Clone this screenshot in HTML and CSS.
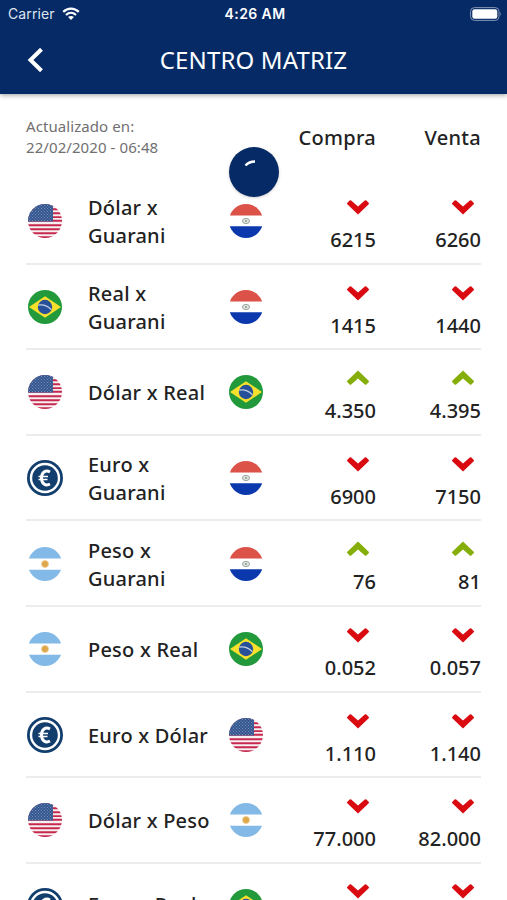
FILE: index.html
```html
<!DOCTYPE html>
<html lang="es">
<head>
    <meta charset="UTF-8">
    <title>Centro Matriz</title>
    <link rel="stylesheet" href="styles.css">
</head>
<body>

<svg class="defs">
    <clipPath id="round"><circle cx="18" cy="18" r="17"/></clipPath>
    <pattern id="stars" width="3" height="3" patternUnits="userSpaceOnUse">
        <circle cx="1" cy="1" r=".55" fill="#7f98c0"/>
        <circle cx="2.5" cy="2.5" r=".55" fill="#7f98c0"/>
    </pattern>
    <symbol id="us" viewBox="0 0 36 36">
        <g clip-path="url(#round)">
            <path fill="#f6f0f2" d="M0 0h36v36H0z"/>
            <path stroke="#c8284d" stroke-width="1.9" d="M0 2.2h36M0 6.2h36M0 10.2h36M0 14.1h36M0 17.8h36M0 22.2h36M0 26.2h36M0 30.2h36M0 34.1h36"/>
            <path fill="#34568f" d="M0 0h26v18.5H0z"/>
            <path fill="url(#stars)" d="M0 0h26v18.5H0z"/>
        </g>
    </symbol>
    <symbol id="py" viewBox="0 0 36 36">
        <g clip-path="url(#round)">
            <path fill="#fff" d="M0 0h36v36H0z"/>
            <path fill="#dc5148" d="M0 0h36v12.6H0z"/>
            <path fill="#0c38ae" d="M0 23.3h36V36H0z"/>
        </g>
        <ellipse cx="18" cy="18" rx="3.5" ry="2.6" fill="#e4e8e2" stroke="#98a49a" stroke-width="1"/>
        <circle cx="18" cy="18" r="1.1" fill="#8e9c90"/>
    </symbol>
    <symbol id="br" viewBox="0 0 36 36">
        <circle cx="18" cy="18" r="17" fill="#229a3b"/>
        <path fill="#f8e02c" d="M18 7.2L34 18 18 28.8 2 18z"/>
        <circle cx="18" cy="18" r="7.2" fill="#27509a"/>
        <path fill="none" stroke="#c3d2df" stroke-width="1.3" d="M11.3 16.2c5-.9 9.7 1 13 4.5"/>
    </symbol>
    <symbol id="ar" viewBox="0 0 36 36">
        <g clip-path="url(#round)">
            <path fill="#fff" d="M0 0h36v36H0z"/>
            <path fill="#82b9e6" d="M0 0h36v12.4H0zM0 23.7h36V36H0z"/>
        </g>
        <circle cx="18" cy="18" r="3.5" fill="#dfa64a" stroke="#efcf98" stroke-width=".8"/>
    </symbol>
    <symbol id="eu" viewBox="0 0 36 36">
        <circle cx="18" cy="18" r="18" fill="#123e6e"/>
        <circle cx="18" cy="18" r="14" fill="none" stroke="#fff" stroke-width="2.4"/>
        <path fill="none" stroke="#fff" stroke-width="3" d="M23 12c-4.5-2.4-8.5.4-8.5 6s4 8.4 8.5 6"/>
        <path stroke="#fff" stroke-width="1.5" d="M11.5 16.5H21M11.5 19.5h9"/>
    </symbol>
    <symbol id="down" viewBox="0 0 24 16">
        <path fill="#d90a10" d="M1.2 4L3.6 1.6q.8-.8 1.6 0L12 7.6l6.8-6q.8-.8 1.6 0L22.8 4q.5.6-.1 1.2L12 15.400 1.3 5.2q-.6-.6-.1-1.2z"/>
    </symbol>
    <symbol id="up" viewBox="0 0 24 16">
        <path fill="#86ae08" d="M1.2 12l2.4 2.4q.8.8 1.6 0l6.8-6 6.8 6q.8.8 1.6 0l2.4-2.4q.5-.6-.1-1.2L12 .6 1.3 10.8q-.6.6-.1 1.2z"/>
    </symbol>
</svg>

<div class="app">
    <div class="header">
        <div class="status">
            <div class="carrier">Carrier
                <svg class="wifi" viewBox="0 0 18 13">
                    <path fill="none" stroke="#fff" stroke-width="2.2" d="M1.2 4.9c4.5-4.4 11.1-4.4 15.6 0M4 8c3-2.9 7-2.9 10 0"/>
                    <path fill="#fff" d="M9 13L6.1 10c1.7-1.5 4.1-1.5 5.8 0z"/>
                </svg>
            </div>
            <div class="clock">4:26 AM</div>
            <div class="power">
                <svg class="battery" viewBox="0 0 32 14">
                    <rect x=".6" y=".6" width="28.4" height="12.8" rx="3.8" fill="none" stroke="#8494b5" stroke-width="1"/>
                    <rect x="2.3" y="2.3" width="25" height="9.4" rx="2.2" fill="#fff"/>
                    <path fill="#8494b5" d="M30.2 4.8q1.6 2.2 0 4.4z"/>
                </svg>
            </div>
        </div>
        <div class="navbar">
            <svg class="back" viewBox="0 0 16 26">
                <path fill="none" stroke="#fff" stroke-width="4" d="M14.5 2.3L3.5 13l11 10.7"/>
            </svg>
            <h1 class="title">CENTRO MATRIZ</h1>
        </div>
    </div>

    <div class="content">
        <div class="head">
            <p class="updated">Actualizado en:<br>22/02/2020 - 06:48</p>
            <div class="col">Compra</div>
            <div class="col">Venta</div>
            <div class="spinner">
                <svg viewBox="0 0 50 50"><path fill="none" stroke="#fff" stroke-width="2.4" d="M16.5 18.5q3.5-4 9.5-4"/></svg>
            </div>
        </div>

        <div class="row">
            <svg class="flag"><use href="#us"/></svg>
            <div class="name">Dólar x Guarani</div>
            <svg class="flag"><use href="#py"/></svg>
            <div class="price"><svg class="arrow"><use href="#down"/></svg>6215</div>
            <div class="price"><svg class="arrow"><use href="#down"/></svg>6260</div>
        </div>
        <div class="row">
            <svg class="flag"><use href="#br"/></svg>
            <div class="name">Real x Guarani</div>
            <svg class="flag"><use href="#py"/></svg>
            <div class="price"><svg class="arrow"><use href="#down"/></svg>1415</div>
            <div class="price"><svg class="arrow"><use href="#down"/></svg>1440</div>
        </div>
        <div class="row">
            <svg class="flag"><use href="#us"/></svg>
            <div class="name">Dólar x Real</div>
            <svg class="flag"><use href="#br"/></svg>
            <div class="price"><svg class="arrow"><use href="#up"/></svg>4.350</div>
            <div class="price"><svg class="arrow"><use href="#up"/></svg>4.395</div>
        </div>
        <div class="row">
            <svg class="flag"><use href="#eu"/></svg>
            <div class="name">Euro x Guarani</div>
            <svg class="flag"><use href="#py"/></svg>
            <div class="price"><svg class="arrow"><use href="#down"/></svg>6900</div>
            <div class="price"><svg class="arrow"><use href="#down"/></svg>7150</div>
        </div>
        <div class="row">
            <svg class="flag"><use href="#ar"/></svg>
            <div class="name">Peso x Guarani</div>
            <svg class="flag"><use href="#py"/></svg>
            <div class="price"><svg class="arrow"><use href="#up"/></svg>76</div>
            <div class="price"><svg class="arrow"><use href="#up"/></svg>81</div>
        </div>
        <div class="row">
            <svg class="flag"><use href="#ar"/></svg>
            <div class="name">Peso x Real</div>
            <svg class="flag"><use href="#br"/></svg>
            <div class="price"><svg class="arrow"><use href="#down"/></svg>0.052</div>
            <div class="price"><svg class="arrow"><use href="#down"/></svg>0.057</div>
        </div>
        <div class="row">
            <svg class="flag"><use href="#eu"/></svg>
            <div class="name">Euro x Dólar</div>
            <svg class="flag"><use href="#us"/></svg>
            <div class="price"><svg class="arrow"><use href="#down"/></svg>1.110</div>
            <div class="price"><svg class="arrow"><use href="#down"/></svg>1.140</div>
        </div>
        <div class="row">
            <svg class="flag"><use href="#us"/></svg>
            <div class="name">Dólar x Peso</div>
            <svg class="flag"><use href="#ar"/></svg>
            <div class="price"><svg class="arrow"><use href="#down"/></svg>77.000</div>
            <div class="price"><svg class="arrow"><use href="#down"/></svg>82.000</div>
        </div>
        <div class="row">
            <svg class="flag"><use href="#eu"/></svg>
            <div class="name">Euro x Real</div>
            <svg class="flag"><use href="#br"/></svg>
            <div class="price"><svg class="arrow"><use href="#down"/></svg></div>
            <div class="price"><svg class="arrow"><use href="#down"/></svg></div>
        </div>
    </div>
</div>

</body>
</html>
```

FILE: styles.css
```css
body {
    margin: 0;
    font-family: "Noto Sans", "Open Sans", sans-serif;
    color: #222;
    background: #fff;
}
.defs {
    display: block;
    width: 0;
    height: 0;
}
.app {
    height: 900px;
    overflow: hidden;
}
.header {
    height: 94px;
    color: #fff;
    background: #062a65;
    box-shadow: 0 1px 5px rgba(0, 0, 0, .4);
}
.status {
    display: grid;
    grid-template-columns: 1fr auto 1fr;
    align-items: center;
    height: 27px;
    padding: 0 5px 0 8px;
    font-family: Inter, sans-serif;
    font-size: 14px;
}
.carrier {
    display: flex;
    align-items: center;
    gap: 7px;
    color: #dfe5ef;
    letter-spacing: .1px;
}
.wifi {
    width: 18px;
    height: 13px;
}
.clock {
    font-size: 14px;
    font-weight: 600;
    letter-spacing: .4px;
}
.power {
    text-align: right;
}
.battery {
    display: block;
    width: 32px;
    height: 14px;
    margin-left: auto;
}
.navbar {
    display: grid;
    grid-template-columns: 60px 1fr 60px;
    align-items: center;
    height: 65px;
}
.back {
    width: 16px;
    height: 26px;
    margin-left: 27px;
}
.title {
    margin: 0;
    text-align: center;
    font-size: 24px;
    font-weight: 400;
    letter-spacing: .15px;
}
.content {
    padding: 0 26px;
}
.head,
.row {
    display: grid;
    grid-template-columns: 62px 139px 36px 113px 105px;
    align-items: center;
}
.head {
    position: relative;
    height: 85px;
    align-items: start;
}
.updated {
    grid-column: 1 / 4;
    margin: 22px 0 0;
    color: #707070;
    font-size: 15px;
    letter-spacing: .08px;
    line-height: 21px;
}
.col {
    padding-top: 30px;
    text-align: right;
    font-size: 20px;
    font-weight: 500;
    letter-spacing: .3px;
    line-height: 28px;
}
.spinner {
    position: absolute;
    left: 203px;
    top: 53px;
    width: 50px;
    height: 50px;
    border-radius: 50%;
    background: #062a65;
    box-shadow: 0 1px 3px rgba(0, 0, 0, .2);
}
.row {
    box-sizing: border-box;
    height: 85.6px;
    border-bottom: 2px solid #ececec;
}
.flag {
    width: 36px;
    height: 36px;
    margin: 1px 0 0 .5px;
}
.name {
    padding: 3px 12px 0 0;
    font-size: 20px;
    font-weight: 500;
    letter-spacing: .22px;
    line-height: 28px;
}
.row:last-child .name {
    padding: 0 12px 1px 0;
}
.price {
    display: flex;
    flex-direction: column;
    align-items: flex-end;
    align-self: start;
    gap: 11px;
    padding-top: 20px;
    font-size: 20px;
    font-weight: 500;
    line-height: 28px;
}
.arrow {
    width: 24px;
    height: 16px;
    margin-right: 6.5px;
}
.row:last-child .price {
    padding-top: 19px;
}
```
